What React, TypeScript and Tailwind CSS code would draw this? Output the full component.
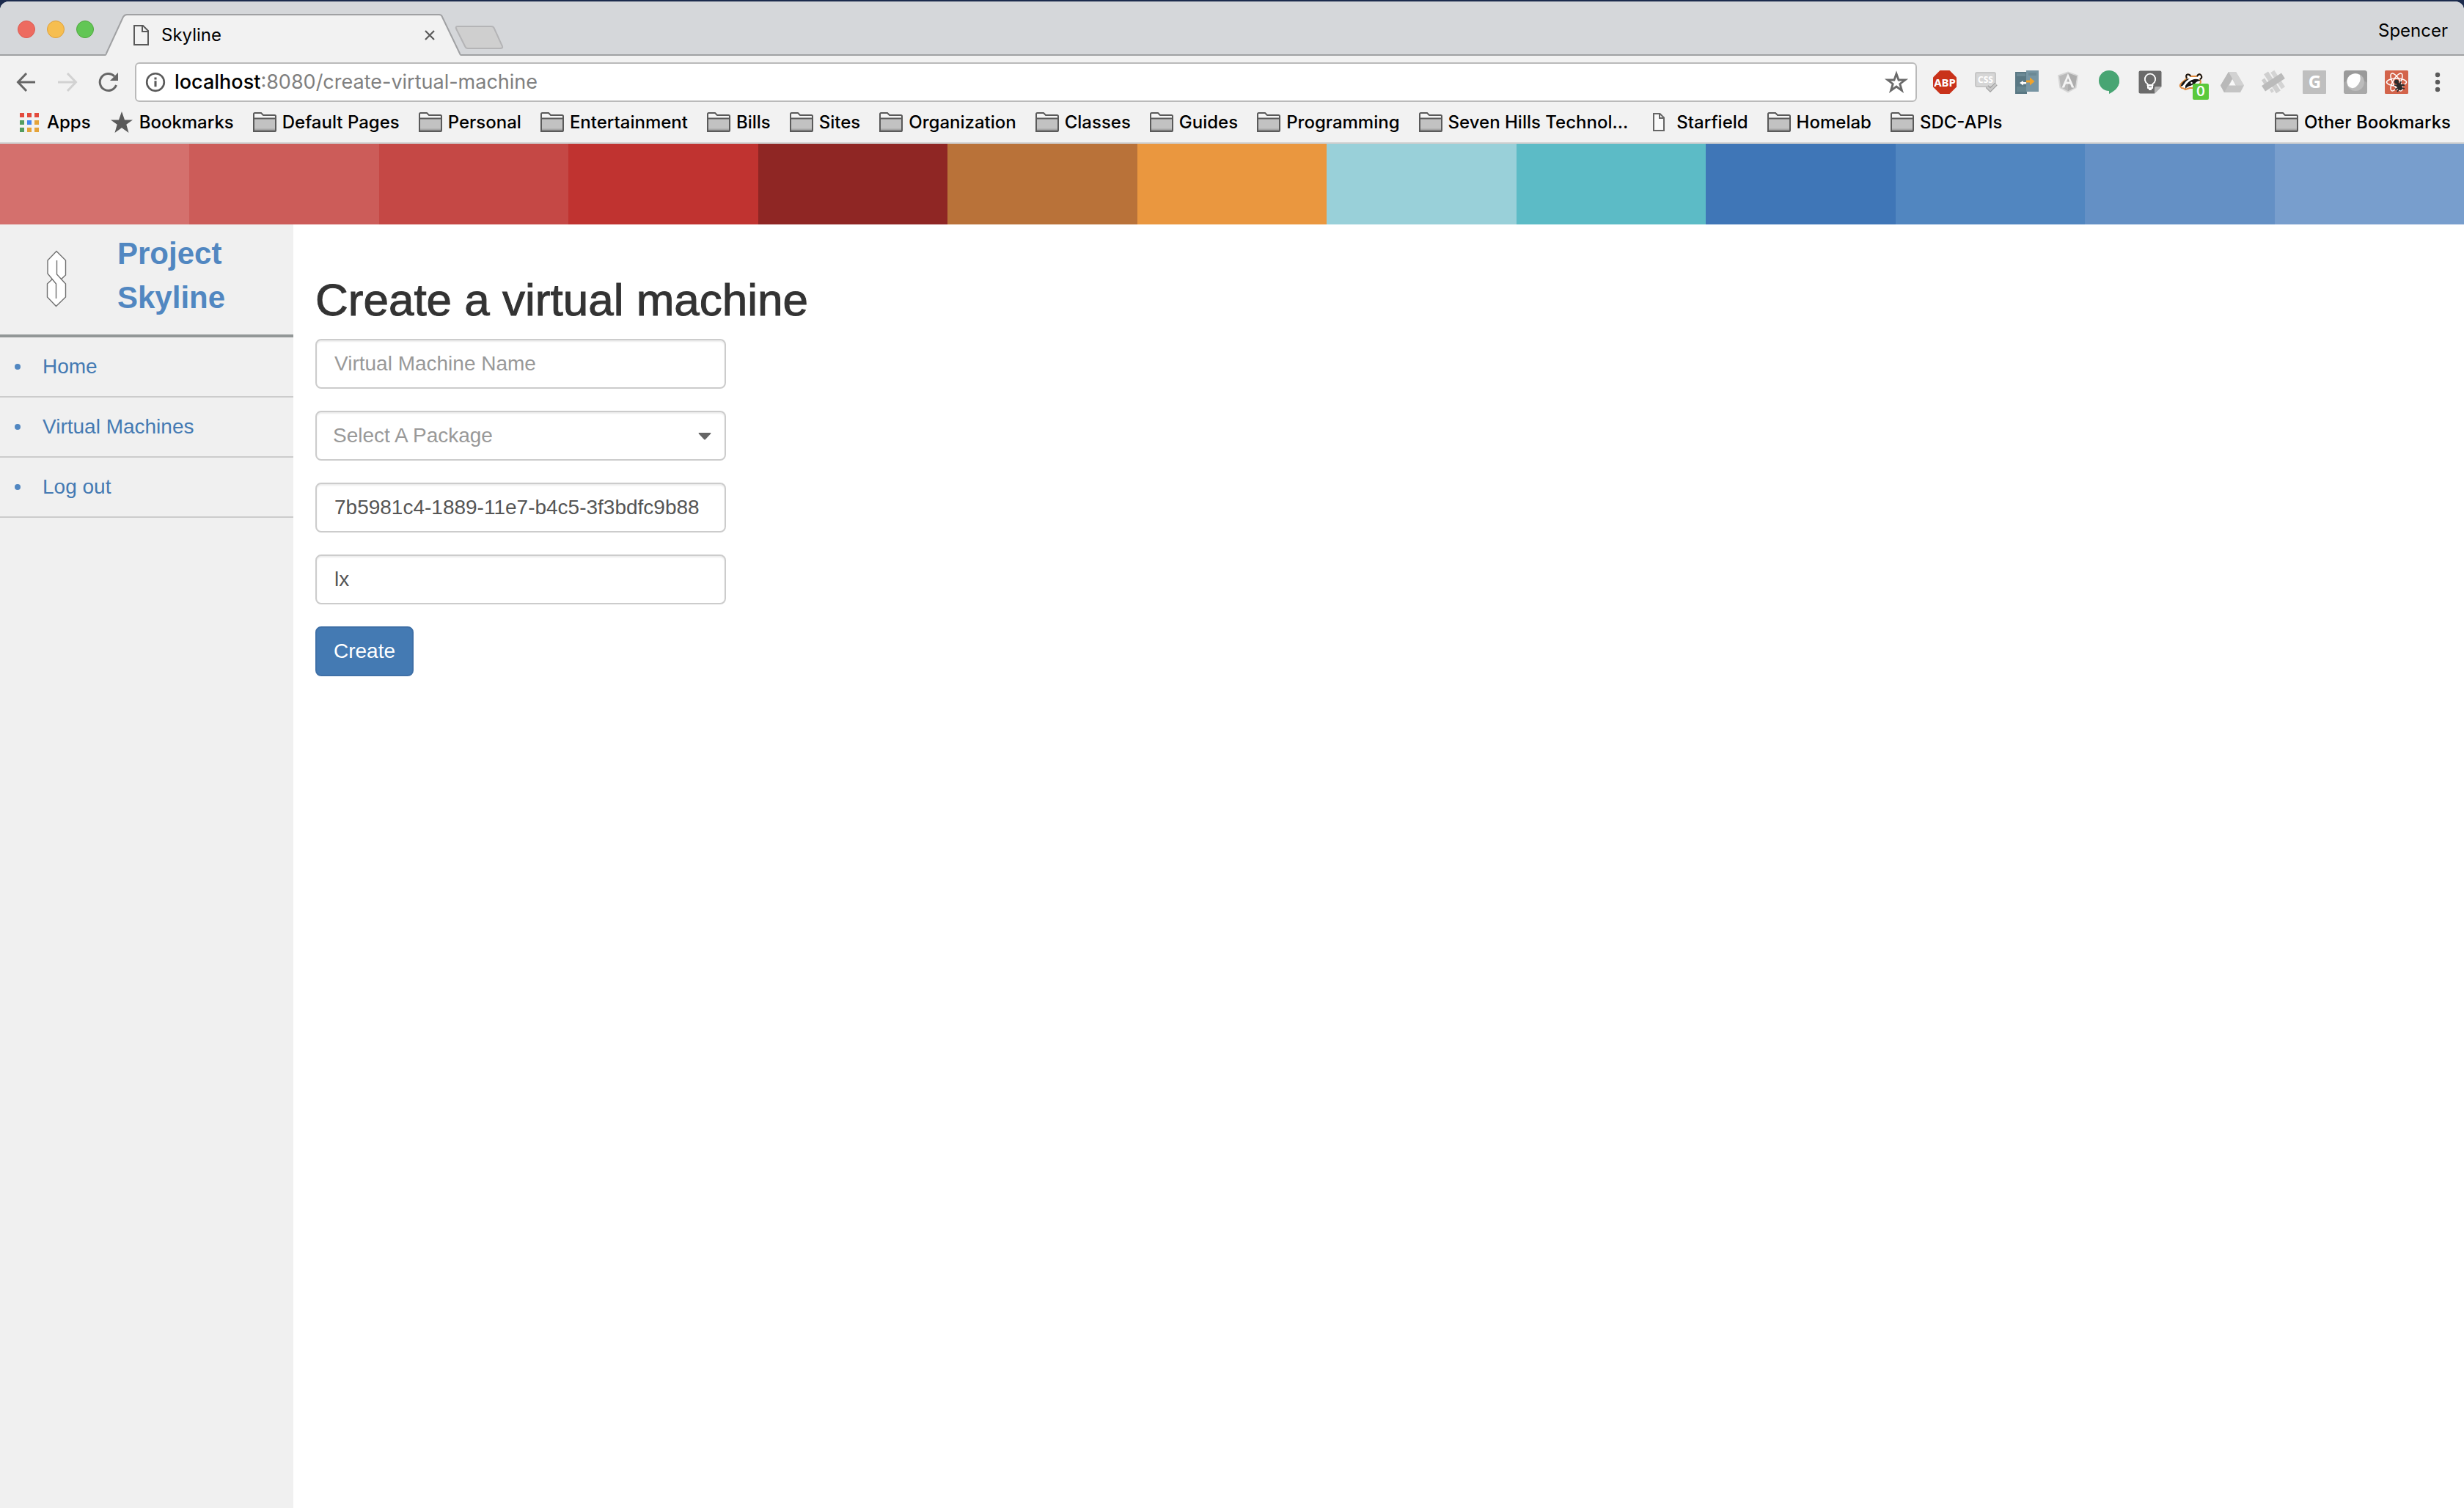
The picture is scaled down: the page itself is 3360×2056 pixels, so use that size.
import React from "react";

function Svg({ children, className = "size-8" }: { children: React.ReactNode; className?: string }) {
  return (
    <svg viewBox="0 0 32 32" className={className + " shrink-0 overflow-visible"} fill="none" aria-hidden="true">
      {children}
    </svg>
  );
}

function FolderIcon() {
  return (
    <Svg>
      <path d="M1 28V4.500Q1 3 2.500 3H11L14 6H29.500Q31 6 31 7.500V27Q31 28 30 28Z" fill="#f6f6f6" stroke="#5a5a5a" strokeWidth="2" />
      <path d="M2 11H30V26H2Z" fill="#c2c2c2" />
      <path d="M2 24.500H30V26.500H2Z" fill="#a8a8a8" />
      <path d="M1 10.500H31M1 27.500H31" stroke="#5a5a5a" strokeWidth="2" />
    </Svg>
  );
}

function FileIcon() {
  return (
    <Svg>
      <path d="M9 4H17.500L23 9.500V27H9Z" fill="#fafafa" stroke="#666" strokeWidth="2" />
      <path d="M17 4V10H23" stroke="#666" strokeWidth="2" />
    </Svg>
  );
}

function StarIcon() {
  return (
    <Svg>
      <path d="M16 1L20 12.500L31 12.500L22.300 18.800L25.500 30L16 23.200L6.500 30L9.700 18.800L1 12.500L12 12.500Z" fill="#5a5a5a" />
    </Svg>
  );
}

function AppsIcon() {
  const colors = ["#e34b3e", "#e34b3e", "#e34b3e", "#549d60", "#4387f0", "#e5a43a", "#549d60", "#e5a43a", "#e5a43a"];
  return (
    <Svg>
      {colors.map((c, i) => (
        <rect key={i} x={3 + (i % 3) * 10} y={3 + Math.floor(i / 3) * 10} width="6" height="6" fill={c} />
      ))}
    </Svg>
  );
}

const bookmarks: { label: string; icon: () => React.ReactElement }[] = [
  { label: "Apps", icon: AppsIcon },
  { label: "Bookmarks", icon: StarIcon },
  { label: "Default Pages", icon: FolderIcon },
  { label: "Personal", icon: FolderIcon },
  { label: "Entertainment", icon: FolderIcon },
  { label: "Bills", icon: FolderIcon },
  { label: "Sites", icon: FolderIcon },
  { label: "Organization", icon: FolderIcon },
  { label: "Classes", icon: FolderIcon },
  { label: "Guides", icon: FolderIcon },
  { label: "Programming", icon: FolderIcon },
  { label: "Seven Hills Technol...", icon: FolderIcon },
  { label: "Starfield", icon: FileIcon },
  { label: "Homelab", icon: FolderIcon },
  { label: "SDC-APIs", icon: FolderIcon },
];

const extensions: { name: string; art: React.ReactNode }[] = [
  {
    name: "Adblock Plus",
    art: (
      <Svg>
        <path d="M9.500 0H22.500L32 9.500V22.500L22.500 32H9.500L0 22.500V9.500Z" fill="#c9321a" />
        <text x="16" y="21.500" textAnchor="middle" fontFamily="Noto Sans, sans-serif" fontWeight="700" fontSize="15" fill="#fff">ABP</text>
      </Svg>
    ),
  },
  {
    name: "CSS checker",
    art: (
      <Svg>
        <rect x="2" y="3" width="27" height="19" rx="1.500" fill="#d6d6d6" stroke="#bdbdbd" strokeWidth="1.500" />
        <text x="15.500" y="16.500" textAnchor="middle" fontFamily="Noto Sans, sans-serif" fontWeight="700" fontSize="12" fill="#fff">CSS</text>
        <path d="M17.500 22L22 26.500L30 18.500" stroke="#9d9d9d" strokeWidth="5" />
        <path d="M17.500 22L22 26.500L30 18.500" stroke="#c9c9c9" strokeWidth="3" />
      </Svg>
    ),
  },
  {
    name: "Switcher",
    art: (
      <Svg>
        <path d="M0 2H16V32H0Z" fill="#5a7884" />
        <path d="M15 0H32V29H15Z" fill="#7795a3" />
        <path d="M2 4H14V8H2ZM18 3H29V7H18Z" fill="#6b8995" />
        <path d="M2 22H15V29H2Z" fill="#66858f" />
        <path d="M6 17L11 14V16H15V18.500H11V20.500Z" fill="#fff" />
        <path d="M15 13.500H20V9.500L26.500 15L20 20.500V16.500H15Z" fill="#f0a32c" />
      </Svg>
    ),
  },
  {
    name: "Angular",
    art: (
      <Svg>
        <path d="M16 1.500L30 6.500L27.500 24L16 30.500L4.500 24L2 6.500Z" fill="#d6d6d6" />
        <path d="M16 3.500L28 7.800L25.800 23L16 28.300L6.200 23L4 7.800Z" fill="#b9b9b9" />
        <path d="M16 3.500L28 7.800L25.800 23L16 28.300Z" fill="#adadad" />
        <path d="M16 4L7.500 23.500H11L13 18.500H19L21 23.500H24.500ZM16 10.500L18 15.500H14Z" fillRule="evenodd" fill="#f4f4f4" />
      </Svg>
    ),
  },
  {
    name: "Hangouts",
    art: (
      <Svg>
        <path d="M16 24V32C22 29 30 24 30 14Z" fill="#48a573" />
        <circle cx="16" cy="14" r="14" fill="#48a573" />
      </Svg>
    ),
  },
  {
    name: "Keep",
    art: (
      <Svg>
        <path d="M2.500 .5H29.500Q31.500 .5 31.500 2.500V22L22 31.500H2.500Q.5 31.500 .5 29.500V2.500Q.5 .5 2.500 .5Z" fill="#6b6b6b" />
        <path d="M22 31.500V24Q22 22 24 22H31.500Z" fill="#b5b5b5" />
        <path d="M12.500 20V18.200A7.200 7.200 0 1 1 19.500 18.200V20Z" stroke="#fff" strokeWidth="1.800" />
        <path d="M12 20H20V24Q20 25 19 25H13Q12 25 12 24Z" fill="#fff" />
        <path d="M14 26H18" stroke="#fff" strokeWidth="2" />
        <path d="M14 22.300H18" stroke="#6b6b6b" strokeWidth="1.200" />
      </Svg>
    ),
  },
  {
    name: "Privacy Badger",
    art: (
      <span className="relative block size-8">
        <Svg>
          <path d="M1 22Q0 20 3 17L10 11Q8 6 11 5.500Q14 5 15 8L24 8Q26 4 29 6Q32 10 28 12L29 16L25 24L14 24L8 26Q6 24 3 24Z" fill="#fff" stroke="#e08a3c" strokeWidth="2" />
          <path d="M10 11Q8 6 11 5.500Q14 5 15 8M24 8Q26 4 29 6Q32 10 28 12" stroke="#151515" strokeWidth="2" />
          <path d="M3 18Q6 14 10 12L14 11Q9 14 6 19Q4 22 1.500 21.500Z" fill="#151515" />
          <path d="M8 21Q12 14 20 12Q25 11 29 14Q24 14 21 18L15 21Q12 21 8 25Z" fill="#151515" />
          <circle cx="16.500" cy="17" r="1.200" fill="#fff" />
        </Svg>
        <span className="absolute top-[18px] left-[18px] flex h-[22px] w-[22px] items-center justify-center rounded-xs bg-[#5ac93b] text-[18px] leading-none font-semibold text-white">0</span>
      </span>
    ),
  },
  {
    name: "Drive",
    art: (
      <Svg>
        <path d="M11 2H21L32 20.500L27 30H5L0 20.500Z" fill="#c4c4c4" />
        <path d="M11 2L16 11L5 30L0 20.500Z" fill="#b9b9b9" />
        <path d="M11 2H21L32 20.500H21.500Z" fill="#d2d2d2" />
        <path d="M16.200 12L20.800 20.500H11.500Z" fill="#f8f8f8" />
      </Svg>
    ),
  },
  {
    name: "Tape",
    art: (
      <Svg>
        <g transform="rotate(-33 16 16)">
          <rect x="4" y="5" width="5" height="8" fill="#cccccc" />
          <rect x="11" y="0" width="7" height="31" fill="#cfcfcf" />
          <rect x="20" y="3" width="6" height="27" fill="#d4d4d4" />
          <rect x="6" y="22" width="4" height="5" fill="#d2d2d2" />
          <rect x="0" y="11.500" width="32" height="9" fill="#bbbbbb" />
        </g>
      </Svg>
    ),
  },
  {
    name: "Grammarly",
    art: (
      <Svg>
        <rect width="32" height="32" rx="1" fill="#bfbfbf" />
        <text x="16.500" y="23.500" textAnchor="middle" fontFamily="Noto Sans, sans-serif" fontWeight="700" fontSize="24" fill="#fff">G</text>
      </Svg>
    ),
  },
  {
    name: "Momentum",
    art: (
      <Svg>
        <rect width="32" height="32" rx="3.500" fill="#9a9a9a" />
        <rect y="15" width="32" height="17" rx="3.500" fill="#a9a9a9" />
        <circle cx="16" cy="16" r="12" fill="#bcbcbc" />
        <path d="M22 6Q25 16 16 23Q10 26 6 21Q2 13 8 7Q15 2 22 6Z" fill="#fff" />
      </Svg>
    ),
  },
  {
    name: "React Developer Tools",
    art: (
      <Svg>
        <rect width="32" height="32" rx="1.500" fill="#d3644b" />
        <g stroke="#fff" strokeWidth="1.500">
          <ellipse cx="16" cy="16" rx="13.500" ry="5" />
          <ellipse cx="16" cy="16" rx="13.500" ry="5" transform="rotate(60 16 16)" />
          <ellipse cx="16" cy="16" rx="13.500" ry="5" transform="rotate(120 16 16)" />
        </g>
        <circle cx="16" cy="15.500" r="3" fill="#2b2b2b" />
        <ellipse cx="20" cy="22" rx="3.500" ry="5.500" transform="rotate(-28 20 22)" fill="#2b2b2b" />
        <path d="M13 20L17 21M14 26L18 24M17 29L19 26M27 20L22 20M27 25L23 24M22 15L21 18" stroke="#2b2b2b" strokeWidth="1.800" />
      </Svg>
    ),
  },
];

function TabStrip() {
  return (
    <header className="flex h-[74px] items-stretch justify-between rounded-t-[12px] bg-[#d5d7da] shadow-[inset_0_-2px_0_#a0a1a3]">
      <div className="flex items-stretch">
        <div className="flex w-[144px] items-center gap-4 pl-6 pt-[2px]">
          <button aria-label="Close window" className="size-6 rounded-full border border-[#dc5b51] bg-[#ed6b60]" />
          <button aria-label="Minimize window" className="size-6 rounded-full border border-[#dea03c] bg-[#f6be50]" />
          <button aria-label="Zoom window" className="size-6 rounded-full border border-[#50a73f] bg-[#62c655]" />
        </div>
        <div className="relative flex w-[484px] items-end">
          <svg viewBox="0 0 484 57" preserveAspectRatio="none" className="absolute bottom-0 h-[57px] w-full" aria-hidden="true">
            <path d="M0 57L24 4Q26 1 29 1H455Q458 1 459 4L484 57Z" fill="#f2f2f2" />
            <path d="M0 56L24 4Q26 1 29 1H455Q458 1 459 4L484 56" fill="none" stroke="#a0a1a3" strokeWidth="2" />
          </svg>
          <div className="relative flex h-[56px] w-full items-center pr-[26px] pl-8">
            <svg viewBox="0 0 32 32" className="size-8" fill="none" aria-hidden="true">
              <path d="M7 3H19L26 10V29H7Z" stroke="#5a5a5a" strokeWidth="2" />
              <path d="M18 3V11H26" stroke="#5a5a5a" strokeWidth="2" />
            </svg>
            <span className="ml-3 flex-1 text-[24px]">Skyline</span>
            <button aria-label="Close tab" className="flex size-8 items-center justify-center">
              <svg viewBox="0 0 14 14" className="size-[14px]" aria-hidden="true">
                <path d="M1 1L13 13M13 1L1 13" stroke="#5a5a5a" strokeWidth="2.200" />
              </svg>
            </button>
          </div>
        </div>
        <button aria-label="New tab" className="-ml-2 flex items-end pb-2">
          <svg viewBox="0 0 68 34" className="h-[34px] w-[68px]" aria-hidden="true">
            <path d="M4 2H50Q53 2 54 5L65 29Q66 32 62 32H18Q15 32 14 29L2 5Q1 2 4 2Z" fill="#cfcfcf" stroke="#b4b4b6" strokeWidth="2" />
          </svg>
        </button>
      </div>
      <button className="mt-[22px] self-start pr-[22px] text-[24px] leading-9">Spencer</button>
    </header>
  );
}

function Toolbar() {
  return (
    <div className="flex h-[72px] items-center px-5">
      <div className="flex items-center gap-6">
        <button aria-label="Back" className="size-8">
          <Svg>
            <path d="M28 16H5M16 4L4.500 16L16 28" stroke="#666" strokeWidth="3" />
          </Svg>
        </button>
        <button aria-label="Forward" className="size-8">
          <Svg>
            <path d="M3 16H27M16 4L27.500 16L16 28" stroke="#d2d2d2" strokeWidth="3" />
          </Svg>
        </button>
        <button aria-label="Reload" className="size-8">
          <Svg>
            <path d="M26.500 20A11.500 11.500 0 1 1 24 8" stroke="#666" strokeWidth="3" />
            <path d="M29 3V14H18Z" fill="#666" />
          </Svg>
        </button>
      </div>
      <div className="ml-5 flex h-[54px] flex-1 items-center rounded-[6px] border-2 border-[#bababa] bg-white pr-[10px] pl-3">
        <Svg className="size-7">
          <circle cx="16" cy="16" r="13.500" stroke="#5a5a5a" strokeWidth="3" />
          <path d="M16 14V23M16 8.500V12" stroke="#5a5a5a" strokeWidth="3.500" />
        </Svg>
        <a href="#" className="ml-3 flex-1 text-[27px] font-medium text-black">
          localhost<span className="font-normal text-[#808080]">:8080/create-virtual-machine</span>
        </a>
        <button aria-label="Bookmark this page" className="size-8">
          <Svg>
            <path d="M16 4.500L19 13H28L20.800 18.500L23.500 27.500L16 22L8.500 27.500L11.200 18.500L4 13H13Z" stroke="#6a6a6a" strokeWidth="2.800" />
          </Svg>
        </button>
      </div>
      <div className="ml-[22px] flex items-center gap-6">
        {extensions.map((e) => (
          <button key={e.name} aria-label={e.name} className="size-8">
            {e.art}
          </button>
        ))}
        <button aria-label="Menu" className="size-8">
          <Svg>
            <g fill="#5a5a5a">
              <circle cx="16" cy="6" r="3.200" />
              <circle cx="16" cy="16" r="3.200" />
              <circle cx="16" cy="26" r="3.200" />
            </g>
          </Svg>
        </button>
      </div>
    </div>
  );
}

function BookmarksBar() {
  return (
    <nav aria-label="Bookmarks" className="flex h-12 items-start justify-between border-b-2 border-[#cfcfcf] pt-[3px] pr-[18px] pl-6 text-[24px] font-medium">
      <div className="flex gap-[26px]">
        {bookmarks.map(({ label, icon: Icon }) => (
          <a key={label} href="#" className="flex h-8 items-center gap-2 whitespace-nowrap">
            <Icon />
            {label}
          </a>
        ))}
      </div>
      <a href="#" className="flex h-8 items-center gap-2 whitespace-nowrap">
        <FolderIcon />
        Other Bookmarks
      </a>
    </nav>
  );
}

function ColorBand() {
  return (
    <div className="grid h-[110px] grid-cols-13">
      <div className="bg-[#d4706d]" />
      <div className="bg-[#cc5c59]" />
      <div className="bg-[#c54845]" />
      <div className="bg-[#c03330]" />
      <div className="bg-[#8f2624]" />
      <div className="bg-[#b97239]" />
      <div className="bg-[#ea973f]" />
      <div className="bg-[#99d0d9]" />
      <div className="bg-[#5cbbc6]" />
      <div className="bg-[#3f76b7]" />
      <div className="bg-[#5186c0]" />
      <div className="bg-[#6490c5]" />
      <div className="bg-[#789ecd]" />
    </div>
  );
}

function Sidebar() {
  return (
    <aside className="w-[400px] shrink-0 bg-[#f0f0f0]">
      <div className="flex border-b-4 border-[#929797] pt-[10px] pb-5">
        <div className="flex w-[160px] items-center pt-2 pl-[63px]">
          <svg viewBox="0 0 28 78" className="h-[78px] w-7" fill="none" aria-hidden="true">
            <path d="M14 1.500L26.500 14V34L20 40L26.500 46V64L13.500 76.500L1.500 64V46L8.500 39.500L2 32V14Z" fill="#fff" />
            <path d="M20 40L26.500 34V14L14 1.500L2 14V32L13.500 46V66" stroke="#707070" strokeWidth="1.400" />
            <path d="M8.500 39.500L1.500 46V64L13.500 76.500L26.500 64V46L14.500 33V14" stroke="#707070" strokeWidth="1.400" />
          </svg>
        </div>
        <div className="text-[42px] leading-[60px] font-bold text-[#5187c1]">
          Project
          <br />
          Skyline
        </div>
      </div>
      <ul>
        {["Home", "Virtual Machines", "Log out"].map((item) => (
          <li key={item} className="flex items-center border-b-2 border-[#cccccc] py-5 pl-5 text-[28px] leading-10">
            <span className="mr-[30px] size-2 rounded-full bg-[#5187c1]" />
            <a href="#" className="text-[#447ab3]">
              {item}
            </a>
          </li>
        ))}
      </ul>
    </aside>
  );
}

const field =
  "h-[68px] w-full rounded-[8px] border-2 border-[#cccccc] bg-white text-[28px] shadow-[inset_0_2px_2px_rgba(0,0,0,0.075)] placeholder:text-[#999999]";

function CreateForm() {
  return (
    <main className="flex-1 bg-white px-[30px] pt-[68px]">
      <h1 className="text-[62px] leading-[70px] text-[#333333] [-webkit-text-stroke:1px_#333333]">Create a virtual machine</h1>
      <form className="mt-[18px] flex w-[560px] flex-col items-start gap-[30px]" onSubmit={(e) => e.preventDefault()}>
        <input aria-label="Virtual machine name" placeholder="Virtual Machine Name" className={field + " px-6 text-[#555555]"} />
        <div className="relative w-full">
          <select aria-label="Package" defaultValue="" className={field + " block appearance-none px-[22px] text-[#999999]"}>
            <option value="">Select A Package</option>
          </select>
          <svg viewBox="0 0 18 10" className="pointer-events-none absolute top-[30px] right-5 h-[10px] w-[18px]" aria-hidden="true">
            <path d="M1 0H17Q18 0 17 1.500L10 9Q9 10 8 9L1 1.500Q0 0 1 0Z" fill="#666" />
          </svg>
        </div>
        <input aria-label="Image" defaultValue="7b5981c4-1889-11e7-b4c5-3f3bdfc9b88" className={field + " px-6 text-[#555555]"} />
        <input aria-label="Brand" defaultValue="lx" className={field + " px-6 text-[#555555]"} />
        <button className="h-[68px] rounded-[8px] border-2 border-[#3f70a7] bg-[#447ab3] px-[23px] text-[28px] text-white">Create</button>
      </form>
    </main>
  );
}

export default function App() {
  return (
    <div className="flex min-h-screen flex-col bg-[#1c2b4d] pt-[2px]">
      <div className="rounded-t-[12px] bg-[#f2f2f2] font-['Inter',sans-serif] text-black">
        <TabStrip />
        <Toolbar />
        <BookmarksBar />
      </div>
      <ColorBand />
      <div className="flex flex-1 font-['Liberation_Sans',Arial,sans-serif]">
        <Sidebar />
        <CreateForm />
      </div>
    </div>
  );
}
